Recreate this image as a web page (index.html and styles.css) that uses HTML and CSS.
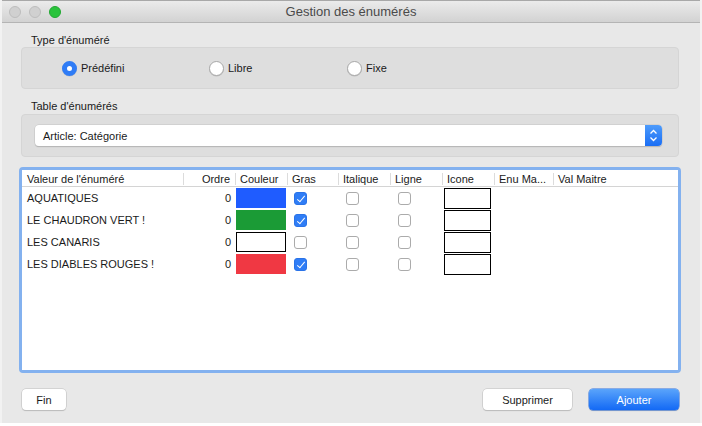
FILE: index.html
```html
<!DOCTYPE html>
<html lang="fr">
<head>
<meta charset="utf-8">
<title>Gestion des énumérés</title>
<link rel="stylesheet" href="styles.css">
</head>
<body>
<div class="window">
  <div class="titlebar">
    <div class="lights">
      <span class="light"></span>
      <span class="light"></span>
      <span class="light green"></span>
    </div>
    <div class="title">Gestion des énumérés</div>
  </div>
  <div class="content">
    <div class="label first">Type d'énuméré</div>
    <div class="group radios">
      <label class="radio"><span class="dot on"></span>Prédéfini</label>
      <label class="radio"><span class="dot"></span>Libre</label>
      <label class="radio"><span class="dot"></span>Fixe</label>
    </div>
    <div class="label second">Table d'énumérés</div>
    <div class="group popgroup">
      <div class="popup">
        <span class="poptext">Article: Catégorie</span>
        <span class="stepper">
          <svg width="9" height="13" viewBox="0 0 9 13"><path d="M1.5 4.5 L4.5 1.5 L7.5 4.5 M1.5 8.5 L4.5 11.5 L7.5 8.5" fill="none" stroke="#fff" stroke-width="1.3"/></svg>
        </span>
      </div>
    </div>
    <div class="tableframe">
      <div class="table">
        <div class="thead">
          <div class="c c-val">Valeur de l'énuméré</div>
          <div class="c c-ord">Ordre</div>
          <div class="c c-col">Couleur</div>
          <div class="c c-gras">Gras</div>
          <div class="c c-chk">Italique</div>
          <div class="c c-chk">Ligne</div>
          <div class="c c-ico">Icone</div>
          <div class="c c-enu">Enu Ma...</div>
          <div class="c c-vm">Val Maitre</div>
        </div>
        <div class="row">
          <div class="c c-val">AQUATIQUES</div>
          <div class="c c-ord">0</div>
          <div class="c c-col"><span class="swatch blue"></span></div>
          <div class="c c-gras"><span class="cb on"></span></div>
          <div class="c c-chk"><span class="cb"></span></div>
          <div class="c c-chk"><span class="cb"></span></div>
          <div class="c c-ico"><span class="iconbox"></span></div>
        </div>
        <div class="row">
          <div class="c c-val">LE CHAUDRON VERT !</div>
          <div class="c c-ord">0</div>
          <div class="c c-col"><span class="swatch green"></span></div>
          <div class="c c-gras"><span class="cb on"></span></div>
          <div class="c c-chk"><span class="cb"></span></div>
          <div class="c c-chk"><span class="cb"></span></div>
          <div class="c c-ico"><span class="iconbox"></span></div>
        </div>
        <div class="row">
          <div class="c c-val">LES CANARIS</div>
          <div class="c c-ord">0</div>
          <div class="c c-col"><span class="swatch white"></span></div>
          <div class="c c-gras"><span class="cb"></span></div>
          <div class="c c-chk"><span class="cb"></span></div>
          <div class="c c-chk"><span class="cb"></span></div>
          <div class="c c-ico"><span class="iconbox"></span></div>
        </div>
        <div class="row">
          <div class="c c-val">LES DIABLES ROUGES !</div>
          <div class="c c-ord">0</div>
          <div class="c c-col"><span class="swatch red"></span></div>
          <div class="c c-gras"><span class="cb on"></span></div>
          <div class="c c-chk"><span class="cb"></span></div>
          <div class="c c-chk"><span class="cb"></span></div>
          <div class="c c-ico"><span class="iconbox"></span></div>
        </div>
      </div>
    </div>
    <div class="buttons">
      <button class="btn fin">Fin</button>
      <span class="spacer"></span>
      <button class="btn supp">Supprimer</button>
      <button class="btn primary">Ajouter</button>
    </div>
  </div>
</div>
</body>
</html>
```
FILE: styles.css
```css
* { box-sizing: border-box; }
html, body { margin: 0; padding: 0; }
body {
  width: 702px;
  height: 426px;
  background: #ffffff;
  font-family: "Liberation Sans", Arial, sans-serif;
  font-size: 11px;
  color: #1a1a1a;
  overflow: hidden;
}
.window {
  width: 702px;
  height: 423px;
  background: #e8e8e8;
  border-left: 2px solid #f2f2f2;
  border-right: 2px solid #f2f2f2;
  display: flex;
  flex-direction: column;
}
.titlebar {
  height: 23px;
  flex: none;
  border-top: 1px solid #a8a8a8;
  border-bottom: 1px solid #b4b4b4;
  background: linear-gradient(#ebebeb, #d2d2d2);
  display: flex;
  align-items: center;
  position: relative;
}
.lights {
  display: flex;
  gap: 8px;
  padding-left: 7px;
}
.light {
  width: 12px;
  height: 12px;
  border-radius: 50%;
  background: #d0d0d0;
  border: 1px solid #bdbdbd;
}
.light.green {
  background: #2ac33c;
  border-color: #22a832;
}
.title {
  position: absolute;
  left: 0;
  right: 0;
  text-align: center;
  font-size: 13px;
  color: #4a4a4a;
  pointer-events: none;
}
.content {
  flex: 1;
  padding: 0 19px 0 17px;
  display: flex;
  flex-direction: column;
}
.label {
  font-size: 11px;
  line-height: 14px;
  padding-left: 12px;
  color: #1a1a1a;
}
.label.first { margin-top: 10px; }
.label.second { margin-top: 10px; margin-bottom: 1px; }
.group {
  margin: 0 2px;
  background: #dedede;
  border: 1px solid #d5d5d5;
  border-radius: 4px;
}
.radios {
  height: 42px;
  display: flex;
  align-items: center;
  padding-left: 40px;
}
.radio {
  display: flex;
  align-items: center;
  font-size: 11px;
  width: 147px;
}
.radio:nth-child(2) { width: 138px; }
.dot {
  width: 15px;
  height: 15px;
  border-radius: 50%;
  background: #fff;
  border: 1px solid #a9a9a9;
  margin-right: 4px;
  box-shadow: 0 0.5px 0.5px rgba(0,0,0,0.15);
}
.dot.on {
  border: 5px solid #2f7cf6;
  background: #fff;
}
.popgroup {
  height: 43px;
  display: flex;
  align-items: center;
  padding-left: 13px;
  padding-right: 16px;
}
.popup {
  flex: 1;
  height: 21px;
  background: #fff;
  border-radius: 4px;
  box-shadow: 0 0 0 0.5px #c4c4c4, 0 1px 1px rgba(0,0,0,0.25);
  display: flex;
  align-items: center;
}
.poptext {
  flex: 1;
  padding-left: 8px;
  font-size: 11px;
}
.stepper {
  width: 17px;
  height: 21px;
  background: linear-gradient(#4d9bfb, #1a6ef5);
  border-radius: 0 4px 4px 0;
  display: flex;
  align-items: center;
  justify-content: center;
}
.tableframe {
  margin-top: 10px;
  height: 206px;
  border: 3px solid #83b1ef;
  border-radius: 4px;
  background: #fff;
}
.table {
  background: #fff;
  height: 100%;
  padding-top: 1px;
}
.thead, .row {
  display: flex;
  align-items: center;
}
.thead {
  height: 16px;
  border-bottom: 1px solid #d4d4d4;
  padding-left: 5px;
}
.thead .c {
  border-right: 1px solid #dcdcdc;
  height: 12px;
  line-height: 12px;
  padding-left: 4px;
}
.thead .c-val { padding-left: 0; }
.thead .c-ord { text-align: right; padding-right: 5px; padding-left: 0; }
.thead .c-vm { border-right: none; }
.row {
  height: 22px;
  padding-left: 5px;
}
.row .c-val { padding-left: 0; }
.c { flex: none; }
.c-val { width: 157px; }
.c-ord { width: 52px; text-align: right; padding-right: 5px; }
.c-col { width: 52px; }
.c-gras { width: 51px; }
.c-chk { width: 52px; }
.c-ico { width: 52px; }
.c-enu { width: 59px; }
.c-vm { width: 124px; }
.row .c-col { padding-left: 0; }
.row .c-gras { padding-left: 6px; display: flex; }
.row .c-chk { padding-left: 7px; display: flex; }
.row .c-ico { padding-left: 1px; }
.swatch {
  display: block;
  width: 50px;
  height: 20px;
}
.swatch.blue { background: #1f5cff; }
.swatch.green { background: #1b9b36; }
.swatch.red { background: #f03843; }
.swatch.white { background: #fff; border: 1px solid #000; }
.cb {
  width: 13px;
  height: 13px;
  border-radius: 3px;
  background: #fff;
  border: 1px solid #ababab;
  position: relative;
}
.cb.on {
  background: #2f7df6;
  border-color: #2a73e8;
}
.cb.on::after {
  content: "";
  position: absolute;
  left: 4px;
  top: 1px;
  width: 3px;
  height: 7px;
  border: solid #fff;
  border-width: 0 1.6px 1.6px 0;
  transform: rotate(40deg);
}
.iconbox {
  display: block;
  width: 47px;
  height: 21px;
  border: 1px solid #000;
  background: #fff;
}
.buttons {
  margin-top: 16px;
  display: flex;
  align-items: center;
  padding: 0 2px 0 3px;
}
.spacer { flex: 1; }
.btn {
  height: 21px;
  font-family: "Liberation Sans", Arial, sans-serif;
  font-size: 11px;
  color: #1a1a1a;
  background: #fff;
  border: none;
  border-radius: 4px;
  box-shadow: 0 0 0 0.5px #bdbdbd, 0 1px 1px rgba(0,0,0,0.2);
  padding: 0;
}
.fin { width: 44px; }
.supp { width: 89px; margin-right: 17px; }
.primary {
  width: 90px;
  color: #fff;
  background: linear-gradient(#5aa4fb, #1369f5);
  box-shadow: 0 0 0 0.5px #2a6fe0, 0 1px 1px rgba(0,0,0,0.2);
}
```
